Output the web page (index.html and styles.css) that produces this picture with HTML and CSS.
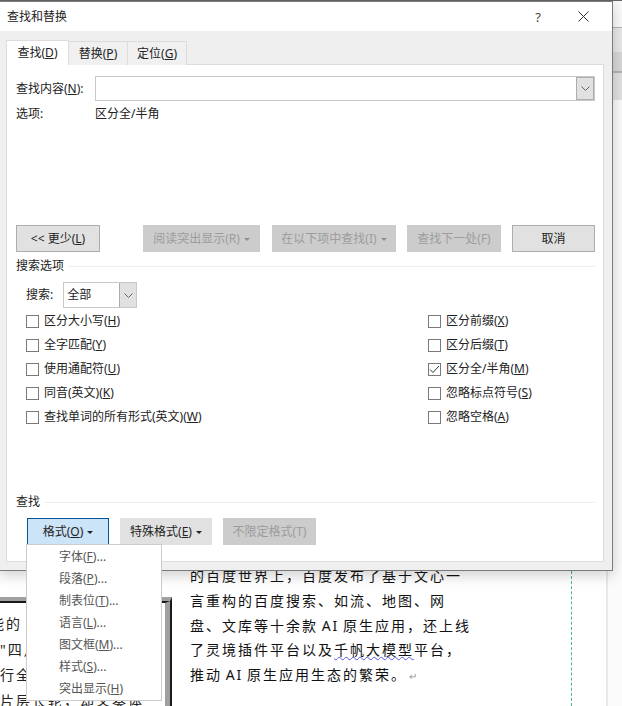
FILE: index.html
```html
<!DOCTYPE html>
<html lang="zh-CN">
<head>
    <meta charset="UTF-8">
    <title>查找和替换</title>
    <link rel="stylesheet" href="styles.css">
</head>
<body>
    <div class="ribbon">
        <div class="band band-top"></div>
        <div class="band band-a"></div>
        <div class="band band-b"></div>
        <div class="band band-c"></div>
    </div>
    <div class="doc">
        <div class="doc-frame">
            <div class="doc-frame-inner">
                <p>能的 I</p>
                <p class="indent">"四月</p>
                <p class="indent">行全</p>
                <p class="indent">片层长轮，却义奏体</p>
            </div>
        </div>
        <div class="doc-text">
            <p>的百度世界上，百度发布了基于文心一</p>
            <p>言重构的百度搜索、如流、地图、网</p>
            <p>盘、文库等十余款 AI 原生应用，还上线</p>
            <p>了灵境插件平台以及<span class="squiggle">千帆大模型</span>平台，</p>
            <p>推动 AI 原生应用生态的繁荣。<span class="para-mark">↵</span></p>
        </div>
        <div class="margin-guide"></div>
    </div>

    <div class="dialog">
        <div class="title-bar">
            <span>查找和替换</span>
            <div class="title-actions">
                <span class="help">?</span>
                <svg class="close" width="11" height="11" viewBox="0 0 11 11"><path d="M0.5 0.5L10.5 10.5M10.5 0.5L0.5 10.5" stroke="#333" fill="none"/></svg>
            </div>
        </div>
        <div class="dialog-body">
            <div class="tabs">
                <div class="tab active">查找(<u>D</u>)</div>
                <div class="tab">替换(<u>P</u>)</div>
                <div class="tab">定位(<u>G</u>)</div>
            </div>
            <div class="panel">
                <div class="find-row">
                    <label class="find-label">查找内容(<u>N</u>):</label>
                    <div class="find-input">
                        <div class="combo-arrow">
                            <svg width="9" height="5" viewBox="0 0 9 5"><path d="M0.5 0.5L4.5 4.5L8.5 0.5" stroke="#666" fill="none"/></svg>
                        </div>
                    </div>
                </div>
                <div class="options-row">
                    <span class="find-label">选项:</span>
                    <span>区分全/半角</span>
                </div>

                <div class="action-row">
                    <button class="btn btn-less">&lt;&lt; 更少(<u>L</u>)</button>
                    <button class="btn btn-disabled btn-read">阅读突出显示(R)<i class="caret"></i></button>
                    <button class="btn btn-disabled btn-findin">在以下项中查找(I)<i class="caret"></i></button>
                    <button class="btn btn-disabled btn-next">查找下一处(F)</button>
                    <button class="btn btn-cancel">取消</button>
                </div>

                <div class="section-title search-title"><span>搜索选项</span></div>
                <div class="search-row">
                    <span>搜索:</span>
                    <div class="select">
                        <span class="select-value">全部</span>
                        <div class="select-arrow">
                            <svg width="9" height="5" viewBox="0 0 9 5"><path d="M0.5 0.5L4.5 4.5L8.5 0.5" stroke="#666" fill="none"/></svg>
                        </div>
                    </div>
                </div>

                <div class="checks">
                    <div class="check-col">
                        <div class="check"><i class="box"></i><span>区分大小写(<u>H</u>)</span></div>
                        <div class="check"><i class="box"></i><span>全字匹配(<u>Y</u>)</span></div>
                        <div class="check"><i class="box"></i><span>使用通配符(<u>U</u>)</span></div>
                        <div class="check"><i class="box"></i><span>同音(英文)(<u>K</u>)</span></div>
                        <div class="check"><i class="box"></i><span>查找单词的所有形式(英文)(<u>W</u>)</span></div>
                    </div>
                    <div class="check-col">
                        <div class="check"><i class="box"></i><span>区分前缀(<u>X</u>)</span></div>
                        <div class="check"><i class="box"></i><span>区分后缀(<u>T</u>)</span></div>
                        <div class="check">
                            <i class="box"><svg width="11" height="9" viewBox="0 0 11 9"><path d="M1 4.5L4 7.5L10 1" stroke="#333" fill="none"/></svg></i><span>区分全/半角(<u>M</u>)</span>
                        </div>
                        <div class="check"><i class="box"></i><span>忽略标点符号(<u>S</u>)</span></div>
                        <div class="check"><i class="box"></i><span>忽略空格(<u>A</u>)</span></div>
                    </div>
                </div>

                <div class="section-title find-title"><span>查找</span></div>
                <div class="format-row">
                    <button class="btn btn-open">格式(<u>O</u>)<i class="caret dark"></i></button>
                    <button class="btn btn-special">特殊格式(<u>E</u>)<i class="caret dark"></i></button>
                    <button class="btn btn-disabled btn-nolimit">不限定格式(T)</button>
                </div>
            </div>
        </div>
    </div>

    <ul class="menu">
        <li>字体(<u>F</u>)...</li>
        <li>段落(<u>P</u>)...</li>
        <li>制表位(<u>T</u>)...</li>
        <li>语言(<u>L</u>)...</li>
        <li>图文框(<u>M</u>)...</li>
        <li>样式(<u>S</u>)...</li>
        <li>突出显示(<u>H</u>)</li>
    </ul>
</body>
</html>
```

FILE: styles.css
```css
* {
    margin: 0;
    padding: 0;
    box-sizing: border-box;
}

html, body {
    height: 100%;
    overflow: hidden;
}

body {
    background: #fbfbfb;
    color: #222222;
    font-family: "Noto Sans", "Noto Sans CJK SC", sans-serif;
    font-size: 12px;
    line-height: 16px;
}

u {
    text-underline-offset: 1px;
}

/* word ribbon behind the dialog, only its edge shows */
.ribbon {
    position: absolute;
    left: 0;
    right: 0;
    top: 0;
}

.band-top {
    height: 27px;
    background: #fbfbfb;
    border-top: 1px solid #666666;
}

.band-a {
    height: 25px;
    background: #e9e9e9;
    border-top: 1px solid #b5b5b5;
}

.band-b {
    height: 19px;
    background: #d8d8d8;
}

.band-c {
    height: 29px;
    background: #e2e2e2;
    border-top: 2px solid #b5b5b5;
}

/* document behind the dialog */
.doc {
    position: absolute;
    left: 0;
    top: 100px;
    bottom: 0;
    width: 608px;
    background: #ffffff;
    border-right: 2px solid #e8e8e8;
}

.doc-frame {
    position: absolute;
    left: -10px;
    top: 497px;
    width: 182px;
    height: 130px;
    border-top: 4px solid #a0a0a0;
    border-right: 2px solid #1a1a1a;
    overflow: hidden;
}

.doc-frame-inner {
    height: 100%;
    border-top: 2px solid #1a1a1a;
    border-right: 5px solid #a0a0a0;
    padding-top: 8px;
    font-size: 14px;
    letter-spacing: 2px;
}

.doc-frame p {
    height: 25.5px;
    line-height: 25px;
    white-space: nowrap;
}

.doc-frame .indent {
    padding-left: 10px;
}

.doc-text {
    position: absolute;
    left: 190px;
    top: 463px;
    width: 290px;
    font-size: 14px;
    letter-spacing: 2px;
    word-spacing: -2px;
    color: #111111;
}

.doc-text p {
    height: 24.75px;
    line-height: 25px;
    white-space: nowrap;
}

.squiggle {
    text-decoration: underline wavy #5a5ae0 1px;
}

.para-mark {
    color: #999999;
    font-size: 10px;
    margin-left: 2px;
}

.margin-guide {
    position: absolute;
    left: 571px;
    top: 471px;
    bottom: 0;
    border-left: 1px dashed #3fbf7f;
}

/* dialog */
.dialog {
    position: absolute;
    left: -2px;
    top: 1px;
    width: 615px;
    height: 570px;
    background: #efefef;
    border: 1px solid #7b7b7b;
    box-shadow: 0 4px 14px rgba(0, 0, 0, 0.2);
    display: flex;
    flex-direction: column;
}

.title-bar {
    height: 29px;
    background: #ffffff;
    padding: 0 23px 0 8px;
    display: flex;
    align-items: center;
    justify-content: space-between;
    flex-shrink: 0;
}

.title-actions {
    display: flex;
    align-items: center;
    gap: 37px;
}

.help {
    font-size: 13px;
    color: #444444;
}

.close {
    display: block;
}

.dialog-body {
    flex: 1;
    padding: 9px 8px 8px 7px;
    display: flex;
    flex-direction: column;
}

.tabs {
    display: flex;
    align-items: flex-end;
    height: 25px;
    position: relative;
    z-index: 1;
}

.tab {
    width: 60px;
    height: 24px;
    background: #f0f0f0;
    border: 1px solid #dcdcdc;
    border-bottom: none;
    margin-left: -1px;
    text-align: center;
    line-height: 23px;
}

.tab:first-child {
    margin-left: 0;
}

.tab.active {
    width: 63px;
    height: 25px;
    background: #ffffff;
    line-height: 24px;
}

.panel {
    flex: 1;
    background: #ffffff;
    border: 1px solid #dcdcdc;
    margin-top: -1px;
    padding: 11px 8px 0 9px;
}

.find-row {
    display: flex;
    align-items: center;
    height: 25px;
}

.find-label {
    width: 79px;
    flex-shrink: 0;
}

.find-input {
    flex: 1;
    height: 25px;
    border: 1px solid #c8c8c8;
    display: flex;
    justify-content: flex-end;
}

.combo-arrow {
    width: 18px;
    background: #e1e1e1;
    border: 1px solid #adadad;
    display: flex;
    align-items: center;
    justify-content: center;
}

.options-row {
    display: flex;
    align-items: center;
    height: 16px;
    margin-top: 5px;
}

.action-row {
    display: flex;
    margin-top: 103px;
}

.btn {
    height: 27px;
    font: inherit;
    color: #222222;
    background: #e1e1e1;
    border: 1px solid #adadad;
    white-space: nowrap;
}

.btn-disabled {
    background: #cccccc;
    border-color: #cccccc;
    color: #9c9c9c;
}

.btn-less {
    width: 84px;
}

.btn-read {
    width: 117px;
    margin-left: 43px;
}

.btn-findin {
    width: 124px;
    margin-left: 12px;
}

.btn-next {
    width: 94px;
    margin-left: 11px;
}

.btn-cancel {
    width: 83px;
    margin-left: 11px;
}

.caret {
    display: inline-block;
    vertical-align: middle;
    margin-left: 4px;
    border-left: 3px solid transparent;
    border-right: 3px solid transparent;
    border-top: 3px solid #8f8f8f;
}

.caret.dark {
    border-top-color: #222222;
}

.section-title {
    display: flex;
    align-items: center;
    gap: 4px;
}

.section-title::after {
    content: "";
    flex: 1;
    border-top: 1px solid #eeeeee;
}

.search-title {
    margin-top: 6px;
}

.search-row {
    display: flex;
    align-items: center;
    gap: 10px;
    margin: 8px 0 0 10px;
}

.select {
    width: 74px;
    height: 26px;
    border: 1px solid #c8c8c8;
    display: flex;
}

.select-value {
    flex: 1;
    padding-left: 3px;
    line-height: 24px;
}

.select-arrow {
    width: 17px;
    background: #e1e1e1;
    border-left: 1px solid #adadad;
    display: flex;
    align-items: center;
    justify-content: center;
}

.checks {
    display: flex;
    justify-content: space-between;
    margin: 1px 0 0 10px;
}

.check-col {
    display: flex;
    flex-direction: column;
}

.check-col:last-child {
    width: 167px;
}

.check {
    height: 24px;
    display: flex;
    align-items: center;
    white-space: nowrap;
}

.box {
    width: 13px;
    height: 13px;
    border: 1px solid #7a7a7a;
    background: #ffffff;
    margin-right: 5px;
    flex-shrink: 0;
    display: flex;
    align-items: center;
    justify-content: center;
}

.find-title {
    margin-top: 65px;
}

.format-row {
    display: flex;
    gap: 11px;
    margin: 8px 0 0 11px;
}

.btn-open {
    width: 82px;
    background: #cce4f7;
    border-color: #005499;
}

.btn-special {
    width: 92px;
    border-color: #e1e1e1;
}

.btn-nolimit {
    width: 93px;
}

/* dropdown */
.menu {
    position: absolute;
    left: 26px;
    top: 544px;
    width: 136px;
    height: 157px;
    background: #ffffff;
    border: 1px solid #cccccc;
    list-style: none;
    padding-top: 1px;
    color: #555555;
}

.menu li {
    height: 22px;
    line-height: 22px;
    padding-left: 32px;
}
```
